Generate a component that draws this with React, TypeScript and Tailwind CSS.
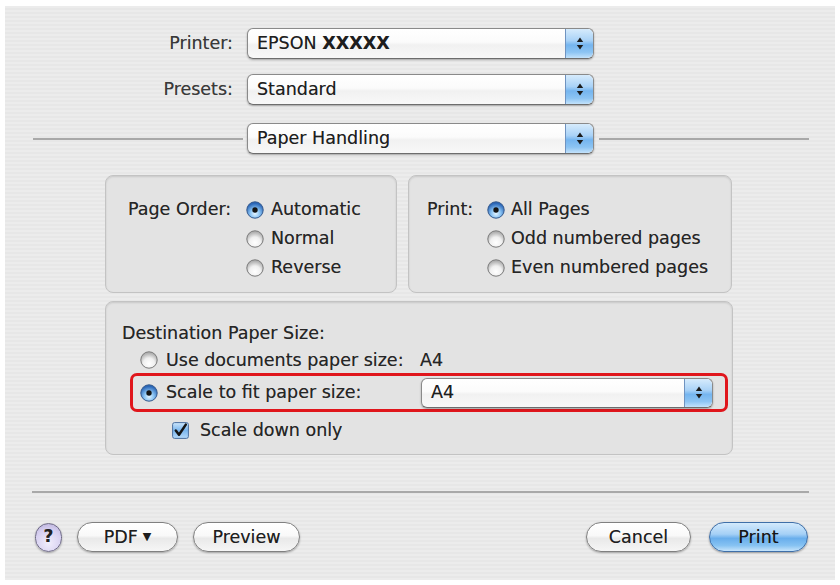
import React from "react";

function Stepper() {
  return (
    <div className="w-[28px] h-full shrink-0 rounded-r-[5px] border-l border-[#6f93c0] bg-[linear-gradient(to_bottom,#d6ebfc_0%,#a9d2f7_40%,#75b5ef_55%,#8cc4f3_80%,#c3e2fb_100%)] flex items-center justify-center">
      <svg width="8" height="15" viewBox="0 0 8 15">
        <path d="M4 1.5 L7.2 6 H0.8 Z" fill="#1c1c1c" />
        <path d="M4 13.5 L7.2 9 H0.8 Z" fill="#1c1c1c" />
      </svg>
    </div>
  );
}

function Popup({ children, w, h }: { children: React.ReactNode; w: string; h: string }) {
  return (
    <div
      className={`${w} ${h} flex shrink-0 rounded-[6px] border border-[#8a8a8a] border-b-[#6d6d6d] shadow-[0_1px_2px_rgba(0,0,0,0.3)] bg-[linear-gradient(to_bottom,#ffffff_0%,#fbfbfb_45%,#f1f1f1_55%,#f8f8f8_100%)] overflow-hidden`}
    >
      <div className="flex-1 flex items-center pl-[9px] text-[17.5px] text-[#1e1e1e] whitespace-nowrap">{children}</div>
      <Stepper />
    </div>
  );
}

function Radio({ on }: { on?: boolean }) {
  if (on) {
    return (
      <svg width="18" height="18" viewBox="0 0 18 18" className="shrink-0">
        <defs>
          <radialGradient id="radOn" cx="50%" cy="72%" r="62%">
            <stop offset="0" stopColor="#e4f4ff" />
            <stop offset="0.45" stopColor="#8cc5f4" />
            <stop offset="1" stopColor="#2b67b8" />
          </radialGradient>
        </defs>
        <circle cx="9" cy="9" r="8.2" fill="url(#radOn)" stroke="#35598c" strokeWidth="1" />
        <circle cx="9" cy="9" r="2.7" fill="#141414" />
      </svg>
    );
  }
  return (
    <svg width="18" height="18" viewBox="0 0 18 18" className="shrink-0">
      <defs>
        <radialGradient id="radOff" cx="50%" cy="72%" r="62%">
          <stop offset="0" stopColor="#ffffff" />
          <stop offset="0.55" stopColor="#f0f0f0" />
          <stop offset="1" stopColor="#b3b3b3" />
        </radialGradient>
      </defs>
      <circle cx="9" cy="9" r="8.2" fill="url(#radOff)" stroke="#7a7a7a" strokeWidth="1" />
    </svg>
  );
}

function Check() {
  return (
    <svg width="17" height="17" viewBox="0 0 17 17" className="shrink-0">
      <defs>
        <linearGradient id="chk" x1="0" y1="0" x2="0" y2="1">
          <stop offset="0" stopColor="#cde6fb" />
          <stop offset="0.5" stopColor="#7ab6ee" />
          <stop offset="1" stopColor="#b6dafa" />
        </linearGradient>
      </defs>
      <rect x="0.6" y="0.6" width="15.8" height="15.8" rx="2" fill="url(#chk)" stroke="#4a6f9f" strokeWidth="1" />
      <path d="M3.8 8.5 L7 12.8 L13.8 2.6" fill="none" stroke="#151515" strokeWidth="2.5" strokeLinecap="round" strokeLinejoin="round" />
    </svg>
  );
}

function Pill({ children, w, blue }: { children: React.ReactNode; w: string; blue?: boolean }) {
  return (
    <div
      className={
        blue
          ? `${w} h-[30px] shrink-0 rounded-full border border-[#3f6fa8] shadow-[0_1px_2px_rgba(0,0,0,0.35)] bg-[linear-gradient(to_bottom,#d3eafc_0%,#a5d0f6_40%,#69aeec_55%,#86c2f2_80%,#c6e4fb_100%)] flex items-center justify-center text-[17.5px] text-[#161616]`
          : `${w} h-[30px] shrink-0 rounded-full border border-[#808080] shadow-[0_1px_2px_rgba(0,0,0,0.3)] bg-[linear-gradient(to_bottom,#ffffff_0%,#f9f9f9_45%,#e9e9e9_55%,#f6f6f6_100%)] flex items-center justify-center text-[17.5px] text-[#1e1e1e]`
      }
    >
      {children}
    </div>
  );
}

function Line({ w }: { w: string }) {
  return <div className={`${w} h-[2px] bg-[#a9a9a9] shrink-0`} />;
}

export default function App() {
  return (
    <div className="w-[840px] h-[585px] bg-white pt-[6px] pl-[5px] font-['DejaVu_Sans',sans-serif] text-[#262626] [text-shadow:0_0_0.5px_rgba(0,0,0,0.45)]">
      <div className="w-[830px] h-[574px] flex flex-col bg-[repeating-linear-gradient(0deg,#ececec_0px,#ececec_2px,#e7e7e7_2px,#e7e7e7_4px)]">
        {/* Printer */}
        <div className="flex items-center mt-[22px]">
          <div className="w-[228px] text-right text-[17.5px] text-[#3a3a3a]">Printer:</div>
          <div className="ml-[14px]">
            <Popup w="w-[347px]" h="h-[31px]">
              <span>EPSON&nbsp;</span>
              <span className="font-bold">XXXXX</span>
            </Popup>
          </div>
        </div>
        {/* Presets */}
        <div className="flex items-center mt-[15px]">
          <div className="w-[228px] text-right text-[17.5px] text-[#3a3a3a]">Presets:</div>
          <div className="ml-[14px]">
            <Popup w="w-[347px]" h="h-[31px]">Standard</Popup>
          </div>
        </div>
        {/* Paper Handling */}
        <div className="flex items-center mt-[18px]">
          <div className="w-[238px] pl-[28px] flex items-center">
            <Line w="w-[210px]" />
          </div>
          <div className="ml-[4px]">
            <Popup w="w-[347px]" h="h-[31px]">Paper Handling</Popup>
          </div>
          <div className="ml-[5px]">
            <Line w="w-[210px]" />
          </div>
        </div>

        {/* Top boxes */}
        <div className="flex mt-[21px] ml-[100px] gap-[11px]">
          <div className="w-[292px] h-[118px] rounded-[8px] border border-[#c3c3c3] bg-[#e3e3e3] shadow-[inset_0_1px_2px_rgba(0,0,0,0.12)] pl-[22px] pt-[19px] flex text-[17.5px]">
            <div className="w-[118px] h-[29px] flex items-center whitespace-nowrap">Page Order:</div>
            <div className="flex flex-col">
              <div className="h-[29px] flex items-center gap-[7px]"><Radio on /><span>Automatic</span></div>
              <div className="h-[29px] flex items-center gap-[7px]"><Radio /><span>Normal</span></div>
              <div className="h-[29px] flex items-center gap-[7px]"><Radio /><span>Reverse</span></div>
            </div>
          </div>
          <div className="w-[324px] h-[118px] rounded-[8px] border border-[#c3c3c3] bg-[#e3e3e3] shadow-[inset_0_1px_2px_rgba(0,0,0,0.12)] pl-[18px] pt-[19px] flex text-[17.5px]">
            <div className="w-[60px] h-[29px] flex items-center whitespace-nowrap">Print:</div>
            <div className="flex flex-col">
              <div className="h-[29px] flex items-center gap-[6px] whitespace-nowrap"><Radio on /><span>All Pages</span></div>
              <div className="h-[29px] flex items-center gap-[6px] whitespace-nowrap"><Radio /><span>Odd numbered pages</span></div>
              <div className="h-[29px] flex items-center gap-[6px] whitespace-nowrap"><Radio /><span>Even numbered pages</span></div>
            </div>
          </div>
        </div>

        {/* Destination box */}
        <div className="mt-[8px] ml-[100px] w-[628px] h-[154px] rounded-[8px] border border-[#c3c3c3] bg-[#e3e3e3] shadow-[inset_0_1px_2px_rgba(0,0,0,0.12)] pl-[16px] pt-[19px] flex flex-col text-[17.5px]">
          <div className="h-[24px] flex items-center whitespace-nowrap">Destination Paper Size:</div>
          <div className="mt-[3px] ml-[18px] h-[24px] flex items-center gap-[8px] whitespace-nowrap">
            <Radio />
            <span className="w-[246px]">Use documents paper size:</span>
            <span>A4</span>
          </div>
          <div className="mt-[1px] ml-[8px] w-[598px] h-[39px] rounded-[7px] border-[3px] border-[#e0161c] pl-[7px] flex items-center gap-[8px] whitespace-nowrap">
            <Radio on />
            <span className="w-[247px]">Scale to fit paper size:</span>
            <Popup w="w-[292px]" h="h-[30px]">A4</Popup>
          </div>
          <div className="mt-[6px] ml-[50px] h-[24px] flex items-center gap-[11px] whitespace-nowrap">
            <Check />
            <span>Scale down only</span>
          </div>
        </div>

        {/* Separator */}
        <div className="mt-[36px] ml-[27px]">
          <Line w="w-[777px]" />
        </div>

        {/* Buttons */}
        <div className="mt-[29px] flex items-center pl-[30px] pr-[27px]">
          <div className="w-[27px] h-[29px] rounded-full border border-[#6e6a86] shadow-[0_1px_2px_rgba(0,0,0,0.3)] bg-[radial-gradient(circle_at_50%_70%,#f1eefc_0%,#d6cff0_60%,#b4aad6_100%)] flex items-center justify-center text-[17px] font-bold text-[#222]">
            ?
          </div>
          <div className="ml-[15px]">
            <Pill w="w-[101px]">
              <span>PDF</span>
              <span className="ml-[5px] text-[11px]">▼</span>
            </Pill>
          </div>
          <div className="ml-[15px]">
            <Pill w="w-[107px]">Preview</Pill>
          </div>
          <div className="flex-1" />
          <Pill w="w-[105px]">Cancel</Pill>
          <div className="ml-[18px]">
            <Pill w="w-[99px]" blue>
              Print
            </Pill>
          </div>
        </div>
      </div>
    </div>
  );
}
